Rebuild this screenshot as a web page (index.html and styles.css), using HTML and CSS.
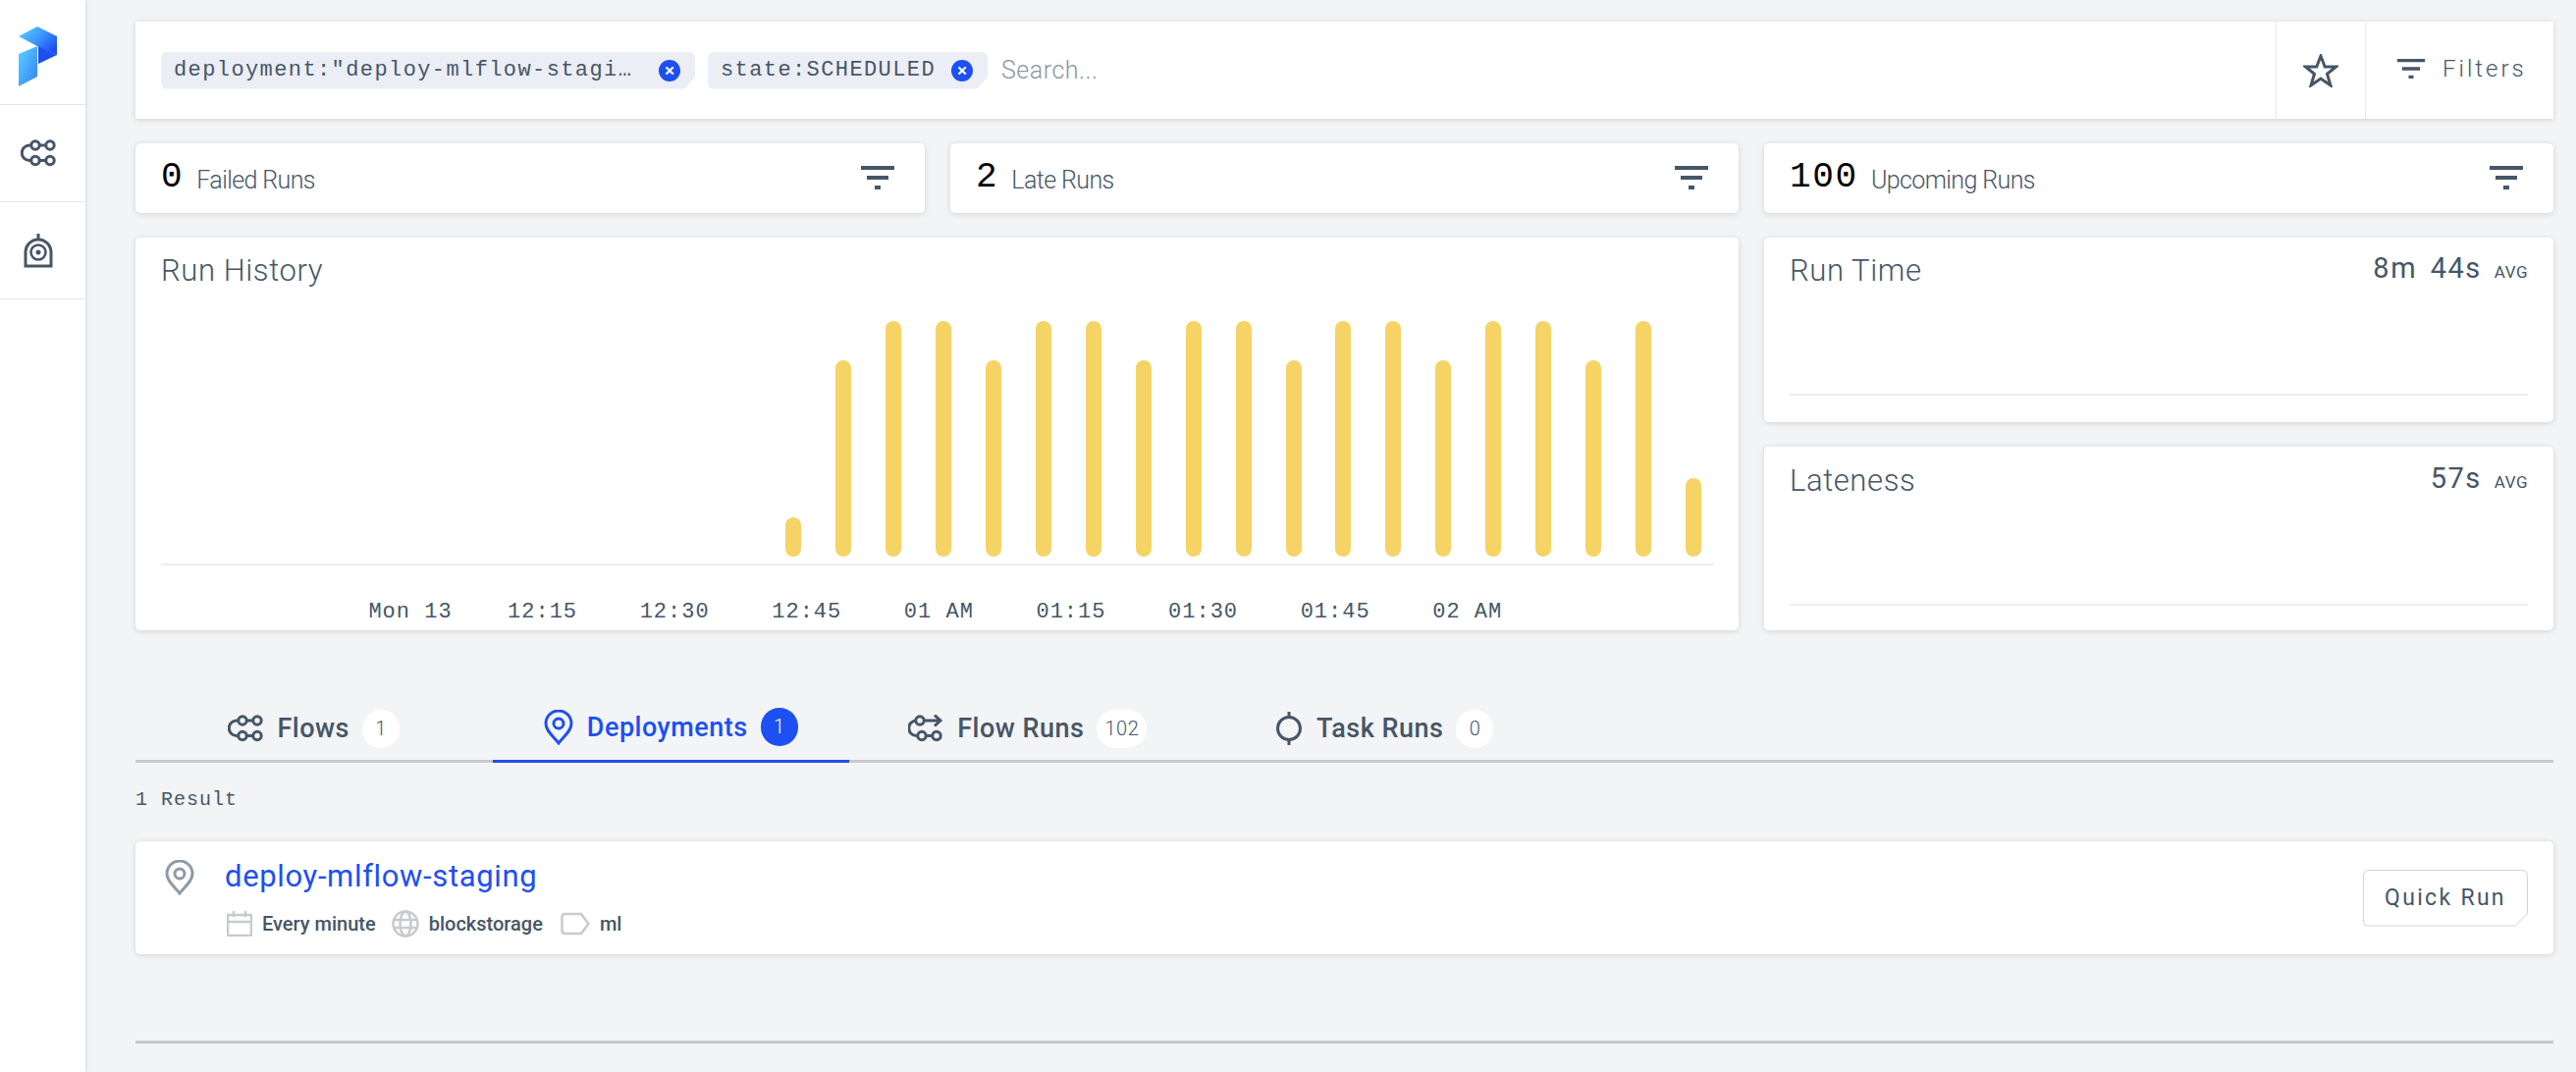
FILE: index.html
```html
<!DOCTYPE html>
<html lang="en">
<head>
    <meta charset="UTF-8">
    <title>Deployments</title>
    <link rel="stylesheet" href="styles.css">
</head>
<body>

    <aside class="sidebar">
        <div class="side-item logo">
            <svg width="40" height="62" viewBox="0 0 40 62">
                <defs>
                    <linearGradient id="logo-top" x1="0" y1="0" x2="1" y2="0.7">
                        <stop offset="0" stop-color="#5fd2ff"/>
                        <stop offset="0.5" stop-color="#3f9cfb"/>
                        <stop offset="1" stop-color="#1c4ff0"/>
                    </linearGradient>
                    <linearGradient id="logo-low" x1="0" y1="0" x2="1" y2="1">
                        <stop offset="0" stop-color="#5fd2ff"/>
                        <stop offset="1" stop-color="#2f80f8"/>
                    </linearGradient>
                </defs>
                <path d="M0 10L19 0L39 10V29L19 20Z" fill="url(#logo-top)"/>
                <path d="M20 20L39 29L20 38Z" fill="#1c4ff0"/>
                <path d="M0 28L19 20V51L0 61Z" fill="url(#logo-low)"/>
            </svg>
        </div>
        <div class="side-item">
            <svg class="icon" width="36" height="28"><use href="#flow-icon"/></svg>
        </div>
        <div class="side-item">
            <svg class="icon" width="30" height="36" viewBox="0 0 30 36">
                <path d="M15 1V7M2 34V20A13 13 0 0 1 28 20V34Z" fill="none" stroke="currentColor" stroke-width="3"/>
                <circle cx="15" cy="20" r="7.5" fill="none" stroke="currentColor" stroke-width="2.5"/>
                <circle cx="15" cy="20" r="2.5" fill="currentColor"/>
            </svg>
        </div>
    </aside>

    <svg class="defs" width="0" height="0">
        <symbol id="flow-icon" viewBox="0 0 36 28">
            <g fill="none" stroke="currentColor" stroke-width="3">
                <circle cx="15" cy="6" r="4.2"/>
                <circle cx="30" cy="6" r="4.2"/>
                <circle cx="15" cy="21.5" r="4.2"/>
                <circle cx="30" cy="21.5" r="4.2"/>
                <path d="M11 6H9A7.75 7.75 0 0 0 9 21.5H11M19 6H26M19 21.5H26"/>
            </g>
        </symbol>
        <symbol id="filter-icon" viewBox="0 0 34 24">
            <path d="M0 0H34V4H0ZM6 10H28V14H6ZM14 20H20V24H14Z" fill="currentColor"/>
        </symbol>
        <symbol id="pin-icon" viewBox="0 0 30 36">
            <path d="M15 34C10 27 2 22 2 14A13 13 0 0 1 28 14C28 22 20 27 15 34Z" fill="none" stroke="currentColor" stroke-width="3"/>
            <circle cx="15" cy="14" r="5" fill="none" stroke="currentColor" stroke-width="3"/>
        </symbol>
    </svg>

    <main class="main">
        <section class="search-bar">
            <div class="chips">
                <span class="chip chip-long">deployment:"deploy-mlflow-stagi…<i class="chip-x">×</i></span>
                <span class="chip">state:SCHEDULED<i class="chip-x">×</i></span>
                <span class="search-text">Search...</span>
            </div>
            <button class="bar-btn star-btn">
                <svg class="icon" width="36" height="34" viewBox="0 0 36 34"><path d="M18 2L22.2 13H33.5L24.5 20.3L28 32L18 25L8 32L11.5 20.3L2.5 13H13.8Z" fill="none" stroke="currentColor" stroke-width="3"/></svg>
            </button>
            <button class="bar-btn filter-btn">
                <svg class="icon" width="30" height="20"><use href="#filter-icon"/></svg>
                Filters
            </button>
        </section>

        <section class="stats">
            <div class="card stat"><b>0</b><span>Failed Runs</span><svg class="icon stat-filter" width="34" height="24"><use href="#filter-icon"/></svg></div>
            <div class="card stat"><b>2</b><span>Late Runs</span><svg class="icon stat-filter" width="34" height="24"><use href="#filter-icon"/></svg></div>
            <div class="card stat"><b>100</b><span>Upcoming Runs</span><svg class="icon stat-filter" width="34" height="24"><use href="#filter-icon"/></svg></div>
        </section>

        <section class="charts">
            <div class="card history">
                <h2>Run History</h2>
                <div class="bars">
                    <div class="bar" style="height:40px"></div>
                    <div class="bar" style="height:200px"></div>
                    <div class="bar" style="height:240px"></div>
                    <div class="bar" style="height:240px"></div>
                    <div class="bar" style="height:200px"></div>
                    <div class="bar" style="height:240px"></div>
                    <div class="bar" style="height:240px"></div>
                    <div class="bar" style="height:200px"></div>
                    <div class="bar" style="height:240px"></div>
                    <div class="bar" style="height:240px"></div>
                    <div class="bar" style="height:200px"></div>
                    <div class="bar" style="height:240px"></div>
                    <div class="bar" style="height:240px"></div>
                    <div class="bar" style="height:200px"></div>
                    <div class="bar" style="height:240px"></div>
                    <div class="bar" style="height:240px"></div>
                    <div class="bar" style="height:200px"></div>
                    <div class="bar" style="height:240px"></div>
                    <div class="bar" style="height:80px"></div>
                </div>
                <div class="axis">
                    <span>Mon 13</span><span>12:15</span><span>12:30</span><span>12:45</span><span>01 AM</span><span>01:15</span><span>01:30</span><span>01:45</span><span>02 AM</span>
                </div>
            </div>
            <div class="side-charts">
                <div class="card mini">
                    <div class="mini-head"><h2>Run Time</h2><p>8m 44s<small>AVG</small></p></div>
                    <div class="mini-line"></div>
                </div>
                <div class="card mini">
                    <div class="mini-head"><h2>Lateness</h2><p>57s<small>AVG</small></p></div>
                    <div class="mini-line"></div>
                </div>
            </div>
        </section>

        <nav class="tabs">
            <a class="tab"><svg class="icon" width="36" height="28"><use href="#flow-icon"/></svg>Flows<em>1</em></a>
            <a class="tab active"><svg class="icon" width="30" height="36"><use href="#pin-icon"/></svg>Deployments<em>1</em></a>
            <a class="tab">
                <svg class="icon" width="36" height="28" viewBox="0 0 36 28">
                    <g fill="none" stroke="currentColor" stroke-width="3">
                        <circle cx="12" cy="6" r="4.2"/>
                        <circle cx="14" cy="21.5" r="4.2"/>
                        <circle cx="29" cy="21.5" r="4.2"/>
                        <path d="M8 6H8.5A7.75 7.75 0 0 0 8.5 21.5H10M18 21.5H25M16 6H33M27 0.5L33 6L27 11.5"/>
                    </g>
                </svg>
                Flow Runs<em>102</em>
            </a>
            <a class="tab">
                <svg class="icon" width="28" height="36" viewBox="0 0 28 36">
                    <circle cx="14" cy="18" r="11.5" fill="none" stroke="currentColor" stroke-width="3"/>
                    <path d="M14 1V7M14 29V35" stroke="currentColor" stroke-width="3"/>
                </svg>
                Task Runs<em>0</em>
            </a>
        </nav>

        <p class="result-count">1 Result</p>

        <div class="card result">
            <svg class="icon result-pin" width="30" height="36"><use href="#pin-icon"/></svg>
            <div class="result-body">
                <a class="result-name">deploy-mlflow-staging</a>
                <div class="result-meta">
                    <svg class="meta-icon" width="26" height="26" viewBox="0 0 26 26">
                        <path d="M1 4H25V25H1ZM1 11H25M7 0V6M19 0V6" fill="none" stroke="currentColor" stroke-width="2.5"/>
                    </svg>
                    <span>Every minute</span>
                    <svg class="meta-icon" width="28" height="28" viewBox="0 0 28 28">
                        <g fill="none" stroke="currentColor" stroke-width="2.5">
                            <circle cx="14" cy="14" r="12.5"/>
                            <ellipse cx="14" cy="14" rx="5.5" ry="12.5"/>
                            <path d="M2 10H26M2 18H26"/>
                        </g>
                    </svg>
                    <span>blockstorage</span>
                    <svg class="meta-icon" width="32" height="24" viewBox="0 0 32 24">
                        <path d="M3.5 5Q3.5 2 6.5 2H23L30.5 12L23 22H6.5Q3.5 22 3.5 19Z" fill="none" stroke="currentColor" stroke-width="2.5"/>
                    </svg>
                    <span>ml</span>
                </div>
            </div>
            <button class="quick-run">Quick Run</button>
        </div>

        <div class="bottom-line"></div>
    </main>

</body>
</html>
```

FILE: styles.css
```css
body {
    margin: 0;
    height: 1092px;
    overflow: hidden;
    display: flex;
    background-color: #f3f4f6;
    color: #465668;
    font-family: 'Roboto', sans-serif;
}

h2, p {
    margin: 0;
    font-weight: 300;
}

.defs {
    position: absolute;
}

.icon {
    color: #465668;
    flex: none;
}

.sidebar {
    width: 87px;
    flex: none;
    background-color: #fff;
    box-shadow: 1px 0 3px rgba(0, 0, 0, 0.12);
}

.side-item {
    height: 98px;
    padding-right: 10px;
    border-bottom: 1px solid #e3e5e8;
    display: flex;
    align-items: center;
    justify-content: center;
}

.logo {
    height: 96px;
    padding-top: 10px;
}

.main {
    width: 2463px;
    margin-left: 51px;
    padding-top: 22px;
}

.card {
    background-color: #fff;
    border-radius: 5px;
    box-shadow: 0 1px 6px rgba(0, 0, 0, 0.14);
}

.search-bar {
    height: 99px;
    display: flex;
    align-items: stretch;
    background-color: #fff;
    box-shadow: 0 1px 6px rgba(0, 0, 0, 0.14);
}

.chips {
    flex: 1;
    display: flex;
    align-items: center;
    padding-left: 26px;
    gap: 13px;
}

.chip {
    height: 38px;
    padding: 0 15px 0 13px;
    display: flex;
    align-items: center;
    justify-content: space-between;
    background-color: #eceef5;
    border-radius: 6px;
    clip-path: polygon(0 0, 100% 0, 100% 70%, calc(100% - 11px) 100%, 0 100%);
    font-family: 'Liberation Mono', monospace;
    font-size: 22px;
    letter-spacing: 1.4px;
    color: #465668;
    box-sizing: border-box;
}

.chip-long {
    width: 544px;
}

.chip-x {
    width: 22px;
    height: 22px;
    margin-left: 16px;
    border-radius: 50%;
    background-color: #1d4ff2;
    color: #fff;
    font-style: normal;
    font-size: 19px;
    font-weight: 500;
    letter-spacing: 0;
    line-height: 21px;
    text-align: center;
    font-family: 'Roboto', sans-serif;
}

.search-text {
    margin-left: 1px;
    font-size: 25px;
    font-weight: 300;
    letter-spacing: 0.5px;
    color: #8b96a3;
}

.bar-btn {
    display: flex;
    align-items: center;
    justify-content: center;
    background: none;
    border: none;
    border-left: 1px solid #e8e9ec;
    padding: 0;
    color: #465668;
    font-family: 'Roboto', sans-serif;
    font-size: 24px;
    font-weight: 300;
    letter-spacing: 3px;
}

.star-btn {
    width: 91px;
}

.filter-btn {
    width: 192px;
    justify-content: flex-start;
    padding: 0 0 3px 31px;
    gap: 17px;
}

.stats {
    display: grid;
    grid-template-columns: 804px 803px 804px;
    gap: 26px;
    margin-top: 25px;
}

.stat {
    height: 71px;
    display: flex;
    align-items: center;
    padding: 0 31px 2px 26px;
    box-sizing: border-box;
}

.stat b {
    font-family: 'Liberation Mono', monospace;
    font-weight: 400;
    font-size: 36px;
    letter-spacing: 1.7px;
    color: #000;
    margin-right: 13px;
}

.stat span {
    font-size: 25px;
    font-weight: 300;
    letter-spacing: -0.6px;
    margin-top: 6px;
}

.stat-filter {
    margin-left: auto;
}

.charts {
    display: grid;
    grid-template-columns: 1633px 804px;
    gap: 26px;
    margin-top: 25px;
}

h2 {
    font-size: 31px;
    letter-spacing: 0.6px;
    color: #465668;
}

.history {
    height: 400px;
    padding: 15px 26px 0;
    box-sizing: border-box;
    display: flex;
    flex-direction: column;
}

.bars {
    height: 282px;
    padding: 0 13px 7px 0;
    border-bottom: 2px solid #eceef5;
    display: flex;
    align-items: flex-end;
    justify-content: flex-end;
    gap: 34.94px;
    box-sizing: border-box;
    margin-right: -1px;
    margin-top: auto;
    flex: none;
}

.bar {
    width: 16px;
    border-radius: 8px;
    background-color: #f5d365;
}

.axis {
    display: flex;
    height: 67px;
    padding: 35px 0 0 186.7px;
    box-sizing: border-box;
    flex: none;
    font-family: 'Liberation Mono', monospace;
    font-size: 22px;
    letter-spacing: 1px;
}

.axis span {
    width: 134.6px;
    text-align: center;
    flex: none;
}

.side-charts {
    display: flex;
    flex-direction: column;
    gap: 25px;
}

.mini {
    height: 188px;
    padding: 15px 26px 0;
    box-sizing: border-box;
    display: flex;
    flex-direction: column;
}

.side-charts .mini:last-child {
    height: 187px;
    padding-top: 16px;
}

.mini-head {
    display: flex;
    justify-content: space-between;
    align-items: flex-start;
}

.mini-head p {
    font-size: 29px;
    font-weight: 400;
    letter-spacing: 1.5px;
    word-spacing: 5px;
    margin-top: -1px;
}

.mini-head small {
    font-size: 17px;
    margin-left: 13px;
    letter-spacing: 0.5px;
}

.mini-line {
    margin-top: auto;
    margin-bottom: 27px;
    border-bottom: 2px solid #eceef5;
}

.side-charts .mini:last-child .mini-line {
    margin-bottom: 25px;
}

.tabs {
    display: flex;
    height: 79px;
    margin-top: 53px;
    border-bottom: 3px solid #c8c9cc;
}

.tab {
    width: 363.5px;
    height: 82px;
    flex: none;
    display: flex;
    align-items: center;
    justify-content: center;
    box-sizing: border-box;
    padding-top: 12px;
    font-size: 27px;
    font-weight: 500;
    letter-spacing: 0.5px;
    color: #465668;
}

.tab svg {
    margin-right: 14px;
}

.tab em {
    margin-left: 13px;
    min-width: 38px;
    height: 39px;
    padding: 0 8px;
    box-sizing: border-box;
    border-radius: 20px;
    background-color: #fff;
    font-style: normal;
    font-size: 20px;
    font-weight: 300;
    line-height: 39px;
    text-align: center;
}

.tab.active {
    color: #1d4ff2;
    border-bottom: 3px solid #1d4ff2;
}

.tab.active .icon {
    color: #1d4ff2;
}

.tab.active em {
    background-color: #1d4ff2;
    color: #fff;
}

.result-count {
    margin-top: 26px;
    font-family: 'Liberation Mono', monospace;
    font-size: 20px;
    font-weight: 400;
    letter-spacing: 1px;
    color: #465668;
}

.result {
    height: 115px;
    margin-top: 31px;
    display: flex;
    align-items: center;
    padding: 0 26px 0 30px;
    box-sizing: border-box;
}

.result-pin {
    color: #8d9aa8;
    align-self: flex-start;
    margin-top: 19px;
}

.result-body {
    flex: 1;
    margin-left: 31px;
}

.result-name {
    display: block;
    font-size: 31px;
    font-weight: 400;
    letter-spacing: 0.65px;
    color: #1d4ff2;
}

.result-meta {
    display: flex;
    align-items: center;
    margin-top: 16px;
    margin-left: 2px;
    font-size: 20px;
    font-weight: 500;
    color: #465668;
}

.meta-icon {
    color: #c8cacd;
    margin-right: 10px;
    flex: none;
}

.result-meta span {
    margin-right: 16px;
}

.quick-run {
    width: 168px;
    height: 58px;
    background-color: #d2d4d8;
    border: none;
    padding: 0;
    clip-path: polygon(0 0, 100% 0, 100% calc(100% - 13px), calc(100% - 13px) 100%, 0 100%);
    border-radius: 6px;
    position: relative;
    z-index: 0;
    font-family: 'Roboto', sans-serif;
    font-size: 23px;
    letter-spacing: 2.3px;
    color: #465668;
}

.quick-run::before {
    content: "";
    position: absolute;
    inset: 1px;
    background-color: #fff;
    border-radius: 5px;
    clip-path: polygon(0 0, 100% 0, 100% calc(100% - 12px), calc(100% - 12px) 100%, 0 100%);
    z-index: -1;
}

.bottom-line {
    margin-top: 88px;
    border-bottom: 3px solid #c8c9cc;
}
```
